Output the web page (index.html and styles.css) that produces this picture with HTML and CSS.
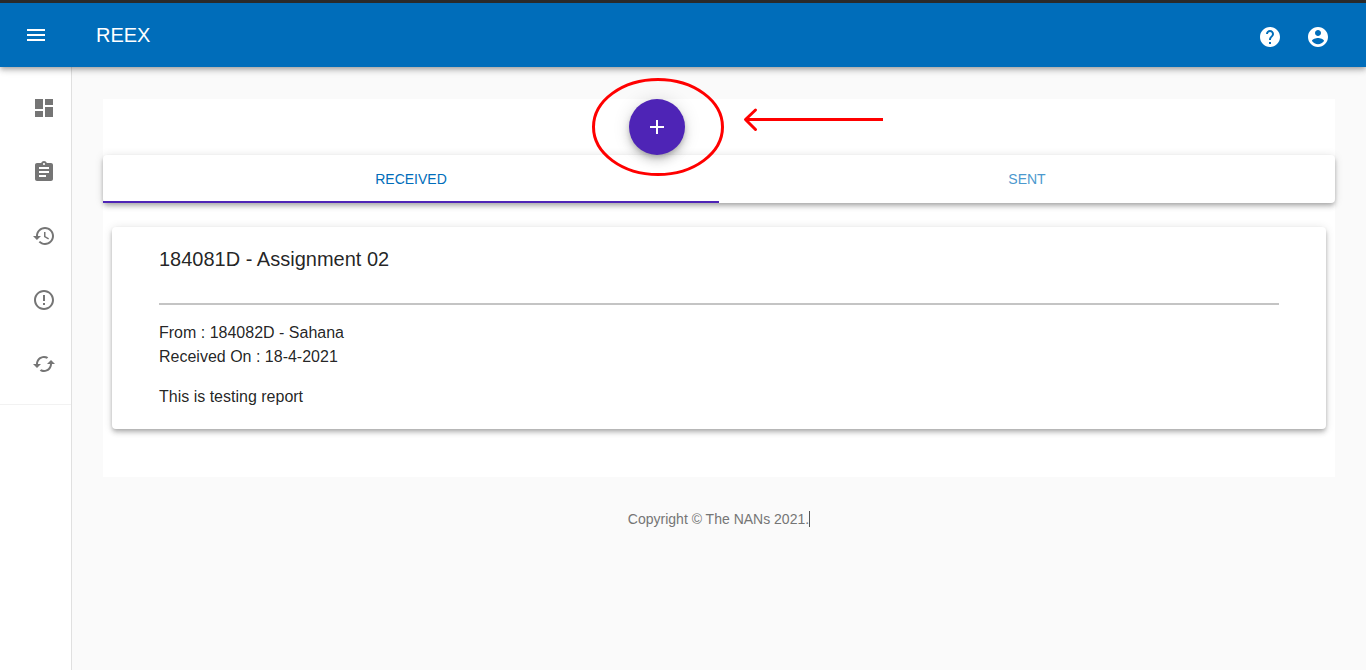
FILE: index.html
```html
<!DOCTYPE html>
<html lang="en">
<head>
<meta charset="utf-8">
<meta name="viewport" content="width=device-width, initial-scale=1">
<title>REEX</title>
<link rel="stylesheet" href="styles.css">
</head>
<body class="page">
<header class="appbar">
  <button class="icon-button" type="button" aria-label="Open menu">
    <svg class="icon" viewBox="0 0 24 24"><path d="M3 18h18v-2H3v2zm0-5h18v-2H3v2zm0-7v2h18V6H3z"/></svg>
  </button>
  <h1 class="brand">REEX</h1>
  <div class="appbar-actions">
    <button class="icon-button" type="button" aria-label="Help">
      <svg class="icon" viewBox="0 0 24 24"><path d="M12 2C6.48 2 2 6.48 2 12s4.48 10 10 10 10-4.48 10-10S17.52 2 12 2zm1 17h-2v-2h2v2zm2.07-7.75l-.9.92C13.45 12.9 13 13.5 13 15h-2v-.5c0-1.1.45-2.1 1.17-2.83l1.24-1.26c.37-.36.59-.86.59-1.41 0-1.1-.9-2-2-2s-2 .9-2 2H8c0-2.210 1.790-4 4-4s4 1.790 4 4c0 .88-.36 1.680-.93 2.250z"/></svg>
    </button>
    <button class="icon-button" type="button" aria-label="Account">
      <svg class="icon" viewBox="0 0 24 24"><path d="M12 2C6.48 2 2 6.48 2 12s4.48 10 10 10 10-4.48 10-10S17.52 2 12 2zm0 3c1.66 0 3 1.34 3 3s-1.34 3-3 3-3-1.34-3-3 1.34-3 3-3zm0 14.200c-2.500 0-4.710-1.280-6-3.220.03-1.990 4-3.080 6-3.080 1.990 0 5.970 1.090 6 3.080-1.290 1.940-3.500 3.220-6 3.220z"/></svg>
    </button>
  </div>
</header>
<div class="layout">
  <nav class="sidebar" aria-label="Main">
    <div class="nav-list">
      <a class="nav-item" href="#dashboard" aria-label="Dashboard"><svg class="icon" viewBox="0 0 24 24"><path d="M3 13h8V3H3v10zm0 8h8v-6H3v6zm10 0h8V11h-8v10zm0-18v6h8V3h-8z"/></svg></a>
      <a class="nav-item" href="#assignments" aria-label="Assignments"><svg class="icon" viewBox="0 0 24 24"><path d="M19 3h-4.180C14.400 1.840 13.300 1 12 1c-1.300 0-2.400.84-2.820 2H5c-1.100 0-2 .9-2 2v14c0 1.100.9 2 2 2h14c1.100 0 2-.9 2-2V5c0-1.100-.9-2-2-2zm-7 0c.55 0 1 .45 1 1s-.45 1-1 1-1-.45-1-1 .45-1 1-1zm2 14H7v-2h7v2zm3-4H7v-2h10v2zm0-4H7V7h10v2z"/></svg></a>
      <a class="nav-item" href="#history" aria-label="History"><svg class="icon" viewBox="0 0 24 24"><path d="M13 3c-4.970 0-9 4.030-9 9H1l3.890 3.890.07.14L9 12H6c0-3.870 3.130-7 7-7s7 3.130 7 7-3.130 7-7 7c-1.930 0-3.680-.79-4.940-2.060l-1.420 1.420C8.270 19.990 10.510 21 13 21c4.970 0 9-4.030 9-9s-4.030-9-9-9zm-1 5v5l4.280 2.540.72-1.210-3.500-2.080V8H12z"/></svg></a>
      <a class="nav-item" href="#issues" aria-label="Issues"><svg class="icon" viewBox="0 0 24 24"><path d="M11 15h2v2h-2zm0-8h2v6h-2zm.99-5C6.470 2 2 6.480 2 12s4.470 10 9.990 10C17.520 22 22 17.520 22 12S17.520 2 11.990 2zM12 20c-4.420 0-8-3.580-8-8s3.580-8 8-8 8 3.580 8 8-3.580 8-8 8z"/></svg></a>
      <a class="nav-item" href="#exchange" aria-label="Exchange"><svg class="icon" viewBox="0 0 24 24"><path d="M19 8l-4 4h3c0 3.310-2.690 6-6 6-1.010 0-1.970-.25-2.800-.7l-1.460 1.460C8.970 19.540 10.430 20 12 20c4.420 0 8-3.580 8-8h3l-4-4zM6 12c0-3.310 2.690-6 6-6 1.010 0 1.970.25 2.800.7l1.460-1.460C15.030 4.460 13.570 4 12 4c-4.420 0-8 3.580-8 8H1l4 4 4-4H6z"/></svg></a>
    </div>
  </nav>
  <main class="content">
    <section class="panel">
      <div class="fab-row">
        <div class="fab-holder">
          <button class="fab" type="button" aria-label="Add">
            <svg class="icon" viewBox="0 0 24 24"><path d="M19 13h-6v6h-2v-6H5v-2h6V5h2v6h6v2z"/></svg>
          </button>
          <svg class="callout" viewBox="0 0 292 98" aria-hidden="true">
            <ellipse cx="66" cy="49" rx="64.500" ry="47.500"/>
            <path d="M291 41.500H154"/>
            <path class="callout-head" d="M163.500 32l-10 9.500 10 10"/>
          </svg>
        </div>
      </div>
      <div class="tabs" role="tablist">
        <button class="tab tab-active" type="button" role="tab" aria-selected="true">RECEIVED</button>
        <button class="tab" type="button" role="tab" aria-selected="false">SENT</button>
      </div>
      <article class="card">
        <h2 class="card-title">184081D - Assignment 02</h2>
        <hr class="card-rule">
        <p class="card-text">From : 184082D - Sahana<br>Received On : 18-4-2021</p>
        <p class="card-text">This is testing report</p>
      </article>
    </section>
    <footer class="footer">Copyright © The NANs 2021.<span class="caret"></span></footer>
  </main>
</div>
</body>
</html>
```
FILE: styles.css
```css
* {
  box-sizing: border-box;
}

.page {
  margin: 0;
  min-height: 100vh;
  display: flex;
  flex-direction: column;
  background: #fafafa;
  color: rgba(0, 0, 0, 0.87);
  font-family: "Liberation Sans", Arial, sans-serif;
  font-size: 16px;
  line-height: 24px;
}

.icon {
  display: block;
  width: 24px;
  height: 24px;
  fill: currentColor;
}

.appbar {
  position: relative;
  z-index: 1;
  display: flex;
  align-items: center;
  height: 67px;
  padding: 0 24px;
  border-top: 3px solid #2a2a2a;
  background: #006dba;
  color: #fff;
  box-shadow: 0 2px 4px -1px rgba(0, 0, 0, 0.2), 0 4px 5px rgba(0, 0, 0, 0.14), 0 1px 10px rgba(0, 0, 0, 0.12);
}

.icon-button {
  padding: 0;
  border: 0;
  background: none;
  color: inherit;
  cursor: pointer;
}

.brand {
  margin: 0 0 0 48px;
  flex: 1;
  font-size: 20px;
  font-weight: 400;
  line-height: 32px;
}

.appbar-actions {
  display: flex;
  gap: 24px;
  padding: 4px 12px 0 0;
}

.layout {
  display: flex;
  flex: 1;
}

.sidebar {
  width: 72px;
  flex-shrink: 0;
  border-right: 1px solid #e0e0e0;
  background: #fff;
}

.nav-list {
  padding: 9px 0 8px;
  border-bottom: 1px solid #f2f2f2;
}

.nav-item {
  display: flex;
  align-items: center;
  height: 64px;
  padding-left: 32px;
  color: #757575;
}

.content {
  flex: 1;
  min-width: 0;
  padding: 32px 31px;
}

.panel {
  padding-bottom: 48px;
  background: #fff;
}

.fab-row {
  display: flex;
  justify-content: center;
  padding-right: 124px;
}

.fab-holder {
  position: relative;
  z-index: 1;
}

.fab {
  display: flex;
  align-items: center;
  justify-content: center;
  width: 56px;
  height: 56px;
  padding: 0;
  border: 0;
  border-radius: 50%;
  background: #4e24b6;
  color: #fff;
  cursor: pointer;
  box-shadow: 0 3px 5px -1px rgba(0, 0, 0, 0.2), 0 6px 10px rgba(0, 0, 0, 0.14), 0 1px 18px rgba(0, 0, 0, 0.12);
}

.callout {
  position: absolute;
  left: -37px;
  top: -21px;
  width: 292px;
  height: 98px;
  fill: none;
  stroke: #f00;
  stroke-width: 3;
  pointer-events: none;
}

.callout-head {
  stroke-linecap: round;
  stroke-linejoin: round;
}

.tabs,
.card {
  border-radius: 4px;
  background: #fff;
  box-shadow: 0 2px 4px -1px rgba(0, 0, 0, 0.2), 0 4px 5px rgba(0, 0, 0, 0.14), 0 1px 10px rgba(0, 0, 0, 0.12);
}

.tabs {
  display: flex;
}

.tab {
  flex: 1;
  height: 48px;
  padding: 0;
  border: 0;
  background: none;
  color: #4c99ce;
  font-family: inherit;
  font-size: 14px;
  cursor: pointer;
}

.tab-active {
  color: #006dba;
  box-shadow: inset 0 -2px #4e24b6;
}

.card {
  margin: 24px 9px 0;
  padding: 16px 47px 20px;
}

.card-title {
  margin: 0;
  font-size: 20px;
  font-weight: 400;
  line-height: 32px;
}

.card-rule {
  height: 2px;
  margin: 28px 0 16px;
  border: 0;
  background: #c4c4c4;
}

.card-text {
  margin: 0 0 16px;
}

.card-text:last-child {
  margin-bottom: 0;
}

.footer {
  display: flex;
  justify-content: center;
  align-items: center;
  margin-top: 32px;
  color: #757575;
  font-size: 14px;
  line-height: 20px;
}

.caret {
  width: 1px;
  height: 16px;
  background: #555;
}
```
